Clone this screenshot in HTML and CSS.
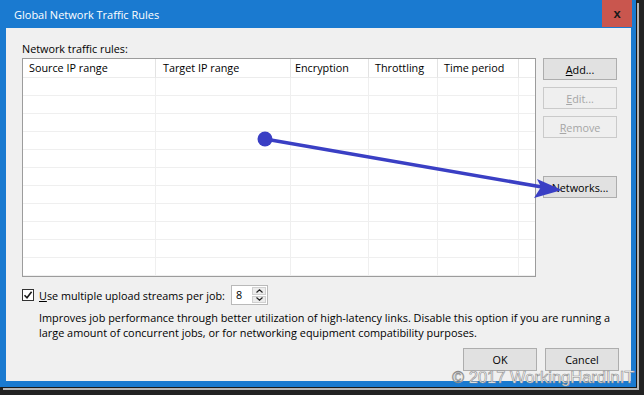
FILE: index.html
```html
<!DOCTYPE html>
<html lang="en">
<head>
    <meta charset="UTF-8">
    <title>Global Network Traffic Rules</title>
    <link rel="stylesheet" href="styles.css">
</head>
<body>
    <div class="desk">
        <!-- Dialog window -->
        <div class="window">
            <div class="titlebar">
                <span class="title">Global Network Traffic Rules</span>
                <span class="close">x</span>
            </div>
            <div class="dialog-body">
                <div class="caption">Network traffic rules:</div>
                <div class="main">
                    <div class="list">
                        <div class="grid head">
                            <div class="cell">Source IP range</div>
                            <div class="cell">Target IP range</div>
                            <div class="cell">Encryption</div>
                            <div class="cell">Throttling</div>
                            <div class="cell">Time period</div>
                            <div class="cell last"></div>
                        </div>
                        <div class="grid rows" id="rows"></div>
                    </div>
                    <div class="side">
                        <button class="btn"><u>A</u>dd...</button>
                        <button class="btn disabled"><u>E</u>dit...</button>
                        <button class="btn disabled"><u>R</u>emove</button>
                        <button class="btn networks">Networks...</button>
                    </div>
                </div>

                <div class="option">
                    <span class="checkbox">
                        <svg width="10" height="10" viewBox="0 0 10 10"><path d="M1.5 5.2 L4 7.8 L8.6 1.8" fill="none" stroke="#1a1a1a" stroke-width="1.6"/></svg>
                    </span>
                    <span class="option-label"><u>U</u>se multiple upload streams per job:</span>
                    <span class="spin">
                        <span class="spin-value">8</span>
                        <span class="spin-buttons">
                            <span class="spin-btn">
                                <svg width="7" height="4" viewBox="0 0 7 4"><path d="M0.5 3.5 L3.5 0.8 L6.5 3.5" fill="none" stroke="#222" stroke-width="1.2"/></svg>
                            </span>
                            <span class="spin-btn">
                                <svg width="7" height="4" viewBox="0 0 7 4"><path d="M0.5 0.5 L3.5 3.2 L6.5 0.5" fill="none" stroke="#222" stroke-width="1.2"/></svg>
                            </span>
                        </span>
                    </span>
                </div>

                <p class="desc">Improves job performance through better utilization of high-latency links. Disable this option if you are running a<br>large amount of concurrent jobs, or for networking equipment compatibility purposes.</p>

                <div class="actions">
                    <button class="btn">OK</button>
                    <button class="btn">Cancel</button>
                </div>
            </div>
        </div>

        <!-- Annotation arrow drawn over the dialog -->
        <svg class="arrow" width="644" height="395" viewBox="0 0 644 395">
            <circle cx="265" cy="139" r="7.5" fill="#3a3fc4"/>
            <line x1="265" y1="139" x2="542" y2="187" stroke="#3a3fc4" stroke-width="3.5"/>
            <polygon points="562,190 534,198 541,187 537,179" fill="#3a3fc4"/>
        </svg>

        <div class="watermark">© 2017 WorkingHardInIT</div>
    </div>

    <script>
        // Empty list rows
        const rows = document.getElementById('rows');
        for (let i = 0; i < 11; i++) {
            for (let c = 0; c < 6; c++) {
                const cell = document.createElement('div');
                cell.className = c === 5 ? 'cell last' : 'cell';
                rows.appendChild(cell);
            }
        }
    </script>
</body>
</html>
```

FILE: styles.css
```css
* {
    box-sizing: border-box;
}

body {
    margin: 0;
    background: #262626;
    font-family: 'Open Sans', 'Noto Sans', sans-serif;
    font-size: 10.8px;
    color: #000;
}

.desk {
    position: relative;
    width: 644px;
    height: 395px;
    overflow: hidden;
    background: #222;
}

.window {
    width: 636px;
    height: 387px;
    background: #1a7ad0;
    padding: 0 5px 6px 6px;
    display: flex;
    flex-direction: column;
    box-shadow: 1px 1px 0 #1a1a1a, 3px 3px 0 #b5b5b5;
}

.titlebar {
    height: 28px;
    display: flex;
    justify-content: space-between;
    align-items: center;
}

.title {
    color: #fff;
    font-size: 11px;
    padding-left: 8px;
}

.close {
    align-self: flex-start;
    width: 30px;
    height: 27px;
    margin-right: -1px;
    background: #c9564e;
    color: #1a1a1a;
    font-family: 'Liberation Sans', sans-serif;
    font-weight: bold;
    font-size: 13px;
    display: flex;
    justify-content: center;
    align-items: center;
}

.dialog-body {
    flex: 1;
    background: #f0f0f0;
    padding: 13px 14px 0 16px;
}

.caption {
    line-height: 15px;
    height: 15px;
    margin-bottom: 2px;
}

.main {
    display: flex;
    gap: 7px;
}

.list {
    width: 514px;
    height: 219px;
    border: 1px solid #9c9c9c;
    background: #fff;
}

.grid {
    display: grid;
    grid-template-columns: 133px 135px 78px 69px 81px 1fr;
}

.head .cell {
    height: 19px;
    line-height: 18px;
    padding-left: 6px;
    border-right: 1px solid #e3e3e3;
    border-bottom: 1px solid #ececec;
    white-space: nowrap;
}

.head .cell:nth-child(2) {
    padding-left: 7px;
}

.head .cell:nth-child(3) {
    padding-left: 4px;
}

.rows .cell {
    height: 18px;
    border-right: 1px solid #efefef;
    border-bottom: 1px solid #efefef;
}

.grid .last {
    border-right: none;
}

.side {
    width: 74px;
    display: flex;
    flex-direction: column;
    gap: 7px;
}

.btn {
    width: 74px;
    height: 22px;
    padding: 0;
    font-family: inherit;
    font-size: 10.8px;
    color: #000;
    background: #e1e1e1;
    border: 1px solid #adadad;
    border-radius: 0;
}

.btn.disabled {
    background: #efefef;
    border-color: #cacaca;
    color: #a6a6a6;
}

.btn.networks {
    margin-top: 31px;
}

.option {
    display: flex;
    align-items: center;
    height: 20px;
    margin-top: 8px;
}

.checkbox {
    width: 12px;
    height: 12px;
    border: 1px solid #333;
    background: #fff;
    display: flex;
    justify-content: center;
    align-items: center;
}

.option-label {
    width: 197px;
    padding-left: 5px;
    white-space: nowrap;
}

.spin {
    width: 37px;
    height: 20px;
    border: 1px solid #b9b9b9;
    background: #fff;
    display: flex;
}

.spin-value {
    flex: 1;
    padding-left: 4px;
    line-height: 17px;
}

.spin-buttons {
    width: 16px;
    display: flex;
    flex-direction: column;
    gap: 1px;
    padding: 1px;
}

.spin-btn {
    flex: 1;
    background: #ececec;
    border: 1px solid #d0d0d0;
    display: flex;
    justify-content: center;
    align-items: center;
}

.desc {
    margin: 5px 0 0 17px;
    font-size: 10.9px;
    line-height: 15px;
    white-space: nowrap;
}

.actions {
    display: flex;
    justify-content: flex-end;
    gap: 8px;
    margin-top: 8px;
    margin-right: -2px;
}

.actions .btn {
    height: 23px;
}

.arrow {
    position: absolute;
    left: 0;
    top: 0;
    pointer-events: none;
}

.watermark {
    position: absolute;
    left: 452px;
    top: 368px;
    font-family: 'Liberation Sans', sans-serif;
    font-size: 16.5px;
    color: #fff;
    -webkit-text-stroke: 0.6px #8a8a8a;
    white-space: nowrap;
}
```
